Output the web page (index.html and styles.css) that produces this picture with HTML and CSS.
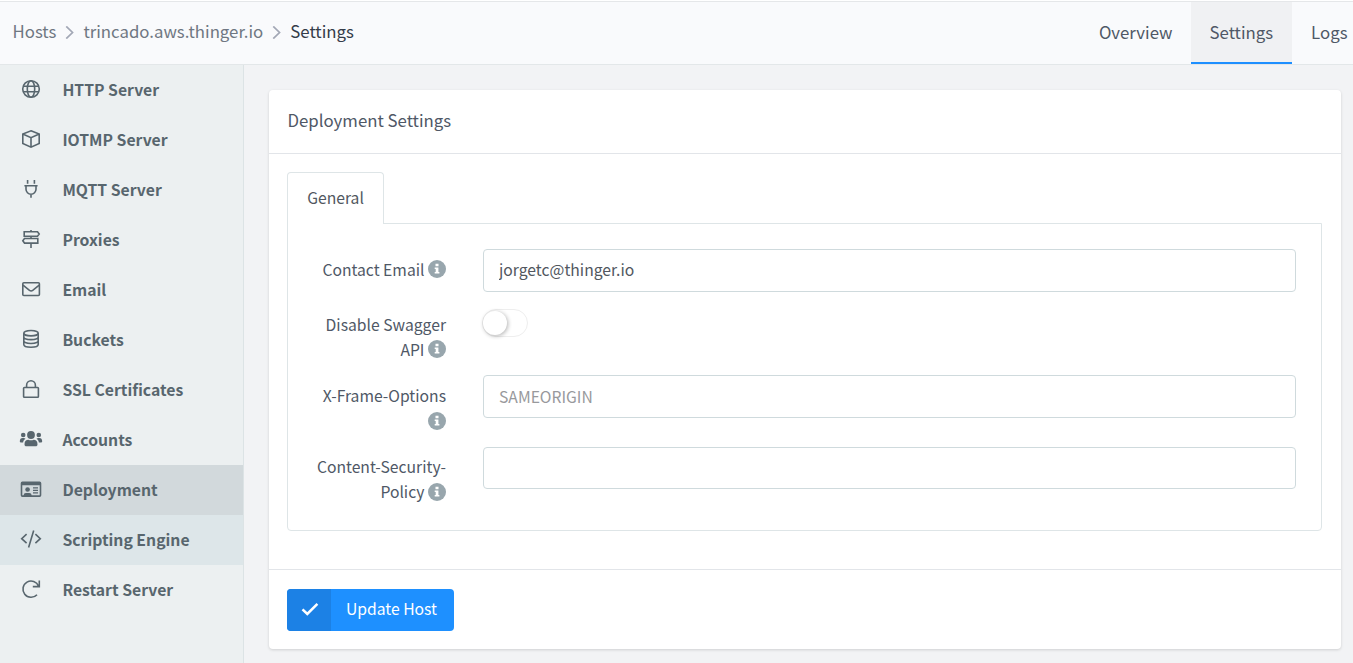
FILE: index.html
```html
<!DOCTYPE html>
<html lang="en">
<head>
<meta charset="utf-8">
<title>Settings</title>
<link rel="stylesheet" href="styles.css">
</head>
<body>
<header class="topbar">
  <nav class="crumbs">
    <a class="crumb">Hosts</a>
    <svg class="sep" viewBox="0 0 8 12"><path d="M1 .4 6.8 6 1 11.6"/></svg>
    <a class="crumb">trincado.aws.thinger.io</a>
    <svg class="sep" viewBox="0 0 8 12"><path d="M1 .4 6.8 6 1 11.6"/></svg>
    <span class="crumb current">Settings</span>
  </nav>
  <nav class="tabs">
    <a class="tab">Overview</a>
    <a class="tab active">Settings</a>
    <a class="tab">Logs</a>
  </nav>
</header>
<div class="layout">
  <aside class="sidebar">
    <a class="item"><svg class="icon" viewBox="0 0 24 20"><circle cx="12" cy="10" r="8.3"/><ellipse cx="12" cy="10" rx="3.7" ry="8.3"/><path d="M4.3 7.2h15.4M4.3 12.8h15.4"/></svg><span>HTTP Server</span></a>
    <a class="item"><svg class="icon" viewBox="0 0 24 20"><path d="M12 1.8 20.2 5v9.6L12 18.2l-8.200-3.600V5zM3.800 5 12 8.700 20.200 5M12 8.700v9.500"/></svg><span>IOTMP Server</span></a>
    <a class="item"><svg class="icon" viewBox="0 0 24 20"><path d="M8.600 1v3.800M15.400 1v3.800M5.400 6.800h13.200M7 6.800v3.400a5 5 0 0 0 10 0V6.800M12 15.200v3.600"/></svg><span>MQTT Server</span></a>
    <a class="item"><svg class="icon" viewBox="0 0 24 20"><path d="M12 1v1.600M12 7.400v2M12 14v5M5.200 2.700h13.300L20.200 5l-1.700 2.300H5.200zM18.800 9.500H5.500L3.800 11.800l1.700 2.300h13.300z"/></svg><span>Proxies</span></a>
    <a class="item"><svg class="icon" viewBox="0 0 24 20"><rect x="3.800" y="3.700" width="16.600" height="12.800" rx="1"/><path d="m4 6.200 6.500 5.200q1.600 1.200 3.200 0l6.500-5.200"/></svg><span>Email</span></a>
    <a class="item"><svg class="icon" viewBox="0 0 24 20"><ellipse cx="12" cy="4.200" rx="7.200" ry="2.700"/><path d="M4.800 4.200v11.400c0 3.600 14.400 3.600 14.400 0V4.200M4.800 8c0 3.500 14.400 3.500 14.400 0M4.800 11.800c0 3.500 14.400 3.500 14.400 0"/></svg><span>Buckets</span></a>
    <a class="item"><svg class="icon" viewBox="0 0 24 20"><rect x="4.600" y="8.500" width="14.800" height="9.700" rx=".8"/><path d="M7.600 8.500V6.200a4.400 4.400 0 0 1 8.800 0v2.300"/></svg><span>SSL Certificates</span></a>
    <a class="item"><svg class="icon solid" viewBox="0 0 24 20"><circle cx="12" cy="6" r="3.900"/><circle cx="4.200" cy="6" r="2.300"/><circle cx="19.800" cy="6" r="2.300"/><path d="M5.500 15.200c0-3.200 1.800-4.400 3.800-4.400q2.700 1 5.400 0c2 0 3.800 1.200 3.800 4.400 0 1.400-.6 2-2 2h-9c-1.400 0-2-.6-2-2zM.8 12.600c0-2.400 1.100-3.500 2.800-3.500h1.200q1 0 1.700.6c-1.400.9-2.100 2-2.400 3.700H1.600q-.8 0-.8-.8zM23.200 12.600c0-2.400-1.100-3.500-2.800-3.500h-1.200q-1 0-1.700.6c1.400.9 2.100 2 2.400 3.700h2.500q.8 0 .8-.8z"/></svg><span>Accounts</span></a>
    <a class="item selected"><svg class="icon solid" viewBox="0 0 24 20"><path fill-rule="evenodd" d="M3.400 2.500h17.200q1.700 0 1.700 1.700v12q0 1.700-1.700 1.700H3.400q-1.700 0-1.700-1.700v-12q0-1.700 1.700-1.700zM3.300 6.300v10h1.200q.3-2.200 2.400-2.200h3.400q2.100 0 2.400 2.200h8V6.300z"/><circle cx="8.600" cy="10.500" r="2.300"/><path d="M14 8.300h5v1.200h-5zM14 10.800h5V12h-5zM14 13.300h5v1.200h-5z"/></svg><span>Deployment</span></a>
    <a class="item hover"><svg class="icon" viewBox="0 0 24 20"><path d="M14.700 1.500 9.600 18.500M7.600 5.200 2.700 9.700l4.900 4.500M16.400 5.200l4.900 4.500-4.900 4.500"/></svg><span>Scripting Engine</span></a>
    <a class="item"><svg class="icon" viewBox="0 0 24 20"><path d="M18 15.700A8.100 8.100 0 1 1 19.600 7.200M20.300 1.400v6.200h-6.500"/></svg><span>Restart Server</span></a>
  </aside>
  <main class="content">
    <section class="card">
      <h1 class="card-title">Deployment Settings</h1>
      <div class="card-body">
        <div class="pills"><a class="pill">General</a></div>
        <form class="panel">
          <div class="row">
            <label class="label">Contact Email <svg class="info" viewBox="0 0 18 18"><circle cx="9" cy="9" r="9"/><path d="M7.500 3.700h3v2.500h-3zM6.700 7.500h3.700V12h1v1.500H6.700V12h1V9h-1z"/></svg></label>
            <input class="field" type="text" value="jorgetc@thinger.io">
          </div>
          <div class="row">
            <label class="label">Disable Swagger API <svg class="info" viewBox="0 0 18 18"><circle cx="9" cy="9" r="9"/><path d="M7.500 3.700h3v2.500h-3zM6.700 7.500h3.700V12h1v1.500H6.700V12h1V9h-1z"/></svg></label>
            <span class="switch"><span class="knob"></span></span>
          </div>
          <div class="row">
            <label class="label">X-Frame-Options <svg class="info" viewBox="0 0 18 18"><circle cx="9" cy="9" r="9"/><path d="M7.500 3.700h3v2.500h-3zM6.700 7.500h3.700V12h1v1.500H6.700V12h1V9h-1z"/></svg></label>
            <input class="field" type="text" placeholder="SAMEORIGIN">
          </div>
          <div class="row">
            <label class="label">Content-Security-Policy <svg class="info" viewBox="0 0 18 18"><circle cx="9" cy="9" r="9"/><path d="M7.500 3.700h3v2.500h-3zM6.700 7.500h3.700V12h1v1.500H6.700V12h1V9h-1z"/></svg></label>
            <input class="field" type="text">
          </div>
        </form>
      </div>
      <footer class="card-footer">
        <button class="button"><span class="button-icon"><svg class="check" viewBox="0 0 18 14"><path d="m1.500 7.300 4.800 4.700L16.400 1.800"/></svg></span><span class="button-text">Update Host</span></button>
      </footer>
    </section>
  </main>
</div>
</body>
</html>
```
FILE: styles.css
```css
* { box-sizing: border-box; }
body {
  margin: 0;
  height: 663px;
  overflow: hidden;
  display: flex;
  flex-direction: column;
  background: #f2f3f5;
  color: #515760;
  font: 15.7px/25px "Noto Sans CJK SC", "Open Sans", sans-serif;
}
.topbar {
  flex: none;
  height: 65px;
  border-top: 1px solid #fff;
  border-bottom: 1px solid #e3e7e9;
  background: #f9fafc;
  box-shadow: inset 0 1px #e5e7e9;
  display: flex;
  justify-content: space-between;
  font-size: 16.8px;
}
.crumbs { display: flex; align-items: center; padding: 0 0 2px 12.5px; color: #6f7782; }
.crumb.current { color: #343c49; }
.sep { width: 9px; height: 13px; margin: 1px 9px 0; fill: none; stroke: #a2a7b5; stroke-width: 1.6; }
.tabs { display: flex; padding-top: 1px; margin-right: -13px; }
.tab { padding: 18px 18.5px 0; color: #4f5866; }
.tab:last-child { padding-left: 19.5px; }
.tab.active { background: #f0f1f3; border-bottom: 2px solid #1e8fff; }
.layout { flex: 1; display: flex; min-height: 0; }
.sidebar { width: 244px; background: #ecf0f1; border-right: 1px solid #dce3e5; color: #58666e; font-size: 15.75px; font-weight: 700; }
.item { height: 50px; display: flex; align-items: center; padding: 0 0 2px 19px; }
.item.selected { background: #d2d9dc; }
.item.hover { background: #dde6e9; }
.icon { width: 24px; height: 20px; margin-right: 19.4px; fill: none; stroke: #58666e; stroke-width: 1.6; }
.icon.solid { fill: #58666e; stroke: none; }
.content { flex: 1; padding: 25px 12px 0 25px; }
.card { height: 559px; background: #fff; border-radius: 4px; box-shadow: 0 1px 3px rgba(0, 0, 0, .15); display: flex; flex-direction: column; }
.card-title { margin: 0; height: 64px; padding: 18px 18.5px 0; border-bottom: 1px solid #e2e5e9; font-size: 16.8px; font-weight: 400; color: #4f5866; }
.card-body { flex: 1; padding: 18px 19px 0 18px; }
.pills { display: flex; }
.pill { height: 52px; width: 97px; margin-bottom: -1px; padding-top: 12px; text-align: center; background: #fff; border: 1px solid #dee5e7; border-bottom: 0; border-radius: 4px 4px 0 0; position: relative; }
.panel { height: 308px; padding: 25px 25px 0 17px; border: 1px solid #dee5e7; border-radius: 0 0 4px 4px; }
.row { display: flex; align-items: flex-start; margin-bottom: 12.5px; }
.row:not(:first-child) .label { padding-bottom: 1px; }
.label { width: 141px; margin-right: 37px; padding-top: 7.75px; text-align: right; color: #4f5866; }
.info { width: 18px; height: 18px; vertical-align: -2.5px; fill: #98a6ad; }
.info path { fill: #fff; }
.field { flex: 1; height: 42.5px; padding: 0 15px 1px; border: 1px solid #cfdadd; border-radius: 4px; background: #fff; font: inherit; color: #515760; }
.field::placeholder { color: #98999c; }
.switch { width: 46px; height: 28px; margin: 5px 0 0 -1px; padding: 1px 0; border: 1px solid #eee; border-radius: 14px; }
.knob { display: block; width: 24px; height: 24px; border-radius: 50%; background: #fff; box-shadow: 1px 1px 4px rgba(0, 0, 0, .3); }
.card-footer { height: 80px; padding: 19px 18px; border-top: 1px solid #e2e5e9; }
.button { display: flex; width: 167px; height: 42px; padding: 0; border: 0; border-radius: 4px; overflow: hidden; background: #1e90ff; color: #fff; font: inherit; }
.button-icon { width: 44px; height: 42px; padding: 0 0 3px 2px; display: flex; align-items: center; justify-content: center; background: #1c81e5; }
.check { width: 18px; height: 14px; fill: none; stroke: #fff; stroke-width: 2.5; }
.button-text { flex: 1; padding: 7px 2px 0 0; }
```
